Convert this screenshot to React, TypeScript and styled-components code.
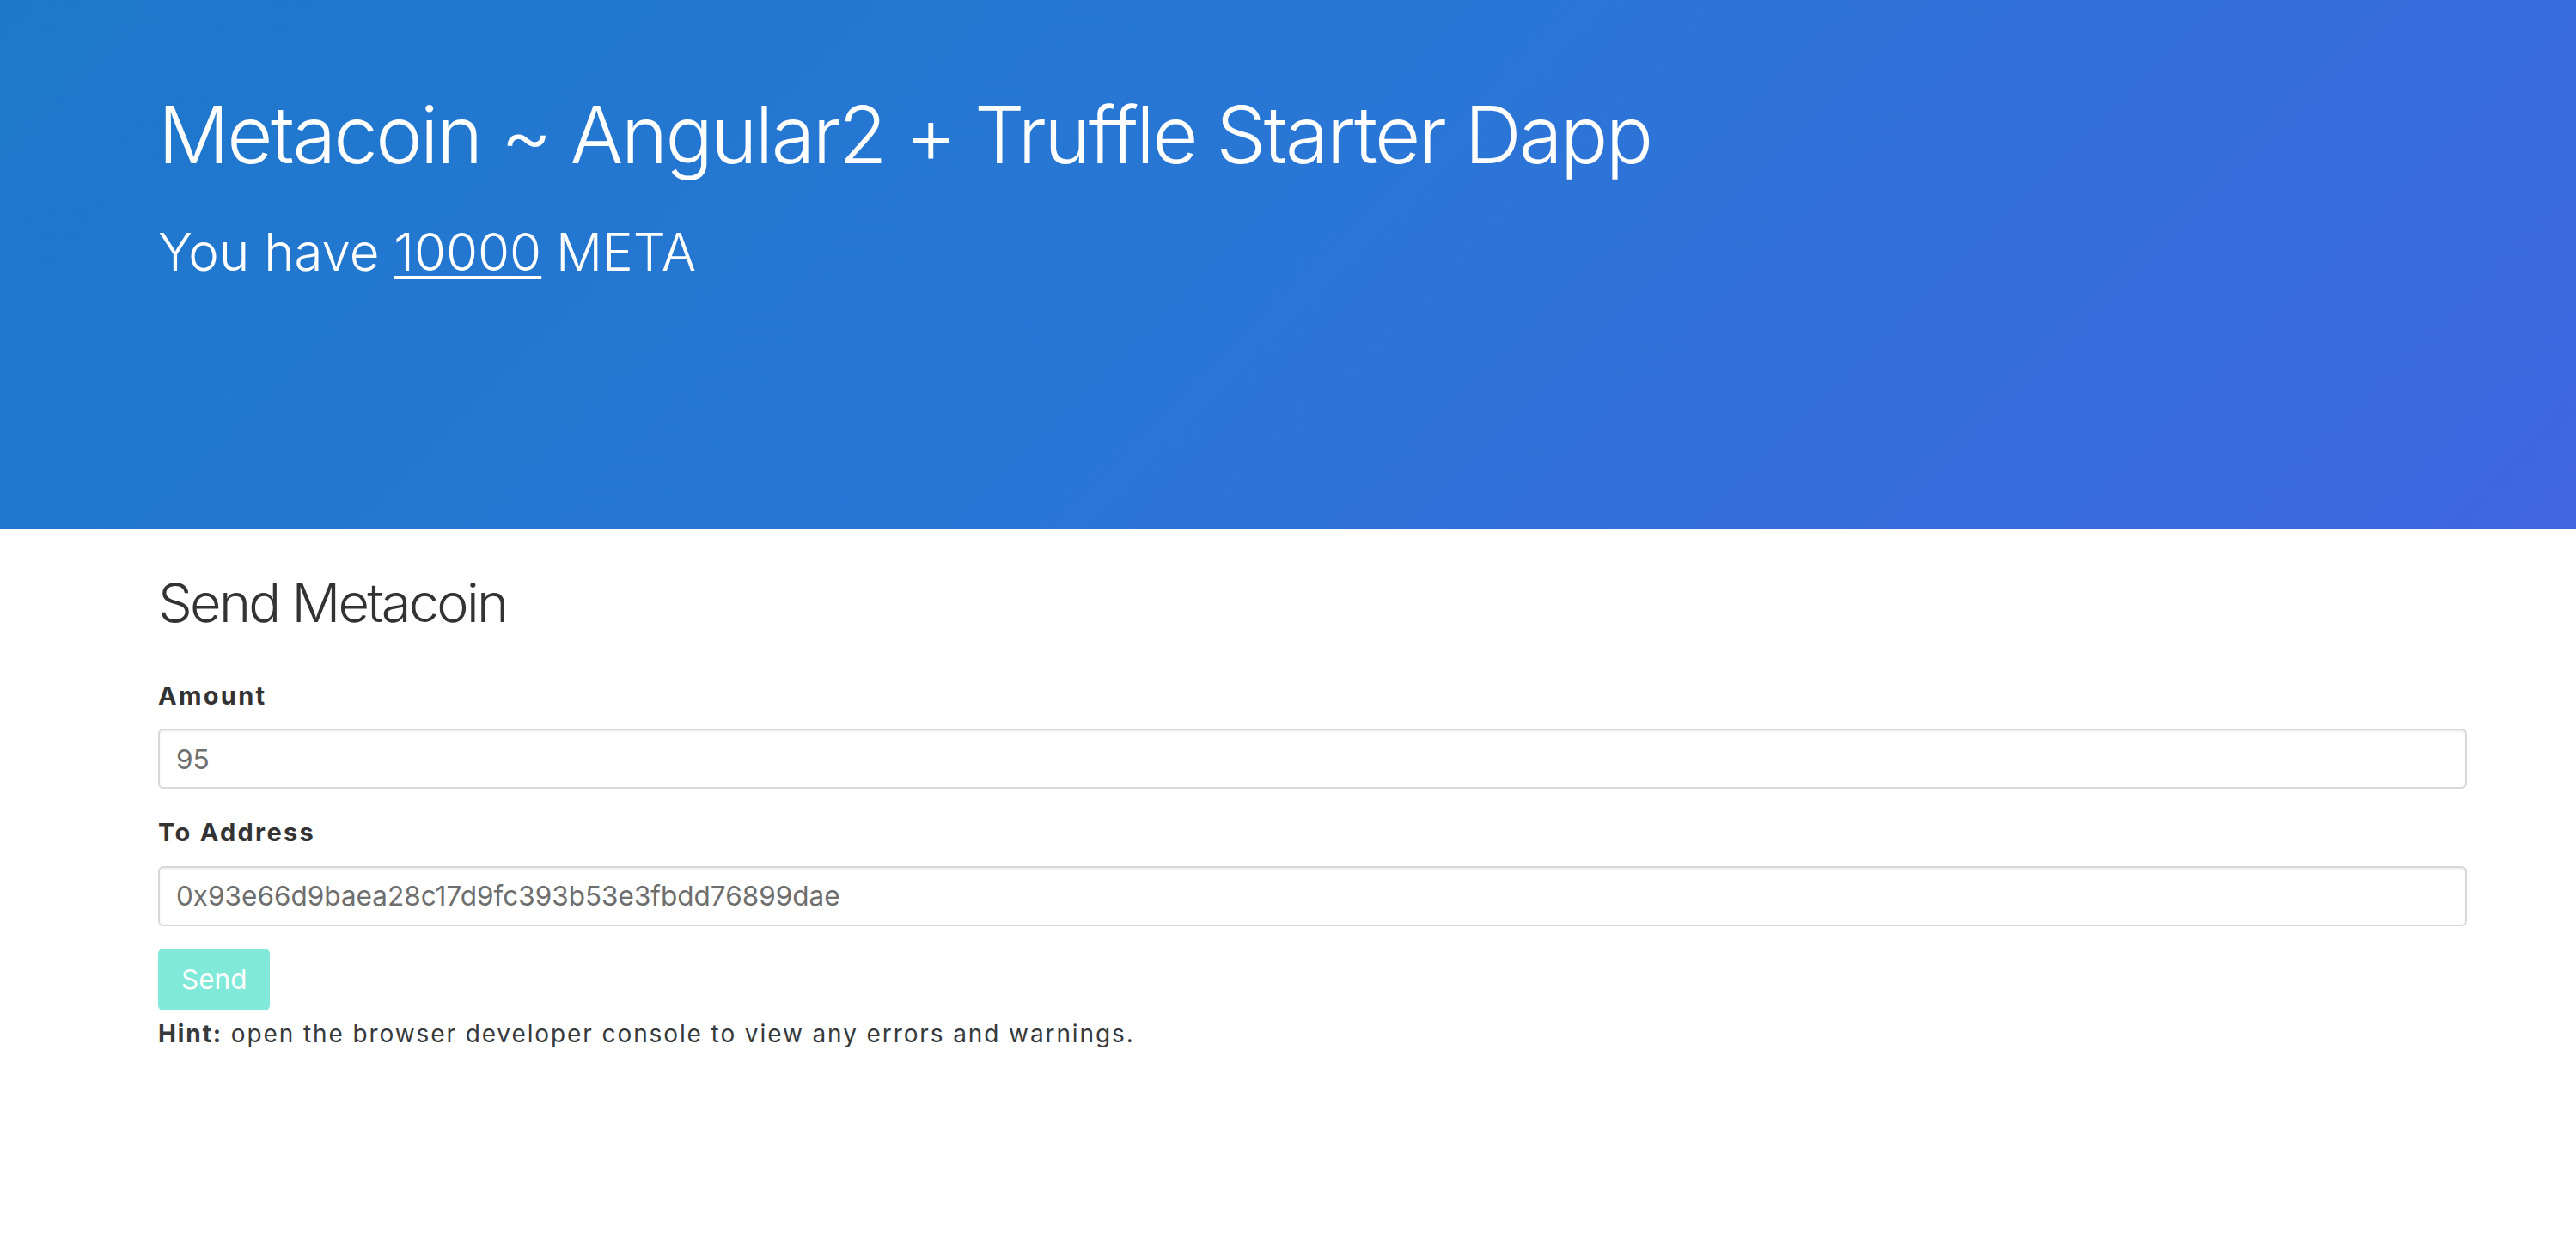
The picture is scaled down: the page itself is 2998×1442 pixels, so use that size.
import React from "react";
import styled, { createGlobalStyle } from "styled-components";

const GlobalStyle = createGlobalStyle`
  html, body {
    margin: 0;
    padding: 0;
    background: #ffffff;
  }
  body {
    font-family: Inter, "Liberation Sans", Arial, sans-serif;
    color: #333333;
  }
  * { box-sizing: border-box; }
`;

const Page = styled.div`
  width: 100%;
  min-height: 1442px;
  background: #ffffff;
`;

const Hero = styled.header`
  height: 616px;
  padding: 106px 184px 0 184px;
  background: linear-gradient(135deg, #1d78cb 0%, #2a76d6 50%, #4066e0 100%);
  color: #ffffff;
`;

const Title = styled.h1`
  margin: 0;
  font-family: Inter, "Liberation Sans", sans-serif;
  font-weight: 300;
  font-size: 92px;
  line-height: 1.1;
  letter-spacing: -2.6px;
`;

const Balance = styled.p`
  margin: 50px 0 0 0;
  font-family: Inter, "Liberation Sans", sans-serif;
  font-weight: 300;
  font-size: 60px;
  line-height: 1.2;
  letter-spacing: 0;
`;

const Amount = styled.span`
  text-decoration: underline;
  text-decoration-thickness: 4px;
  text-underline-offset: 6px;
`;

const Main = styled.main`
  padding: 48px 127px 0 184px;
  display: flex;
  flex-direction: column;
`;

const SectionTitle = styled.h2`
  margin: 0 0 48px 0;
  font-family: Inter, "Liberation Sans", sans-serif;
  font-weight: 300;
  font-size: 63px;
  line-height: 1.2;
  letter-spacing: -2.7px;
  color: #333333;
`;

const Field = styled.div<{ $last?: boolean }>`
  display: flex;
  flex-direction: column;
  gap: 17px;
  margin-bottom: ${(p) => (p.$last ? "26px" : "29px")};
`;

const Label = styled.label`
  font-family: Inter, "Liberation Sans", Arial, sans-serif;
  font-weight: 700;
  font-size: 29px;
  line-height: 1.5;
  letter-spacing: 2.3px;
  color: #333333;
`;

const Input = styled.input`
  width: 100%;
  height: 70px;
  padding: 0 19px;
  border: 2px solid #d8d8d8;
  border-radius: 6px;
  box-shadow: inset 0 2px 2px rgba(0, 0, 0, 0.06);
  font-family: Inter, "Liberation Sans", Arial, sans-serif;
  font-size: 31.5px;
  color: #6e6e6e;
  background: #ffffff;
  outline: none;
`;

const SendButton = styled.button`
  align-self: flex-start;
  height: 72px;
  padding: 0 27px;
  border: none;
  border-radius: 6px;
  background: #80e9d9;
  color: #ffffff;
  font-family: Inter, "Liberation Sans", Arial, sans-serif;
  font-size: 31.5px;
  cursor: pointer;
`;

const Hint = styled.p`
  margin: 6px 0 0 0;
  font-family: Inter, "Liberation Sans", Arial, sans-serif;
  font-size: 28px;
  line-height: 1.5;
  letter-spacing: 1.9px;
  color: #373a3c;
`;

export default function App() {
  return (
    <Page>
      <GlobalStyle />
      <Hero>
        <Title>Metacoin ~ Angular2 + Truffle Starter Dapp</Title>
        <Balance>
          You have <Amount>10000</Amount> META
        </Balance>
      </Hero>
      <Main>
        <SectionTitle>Send Metacoin</SectionTitle>
        <Field>
          <Label htmlFor="amount">Amount</Label>
          <Input id="amount" defaultValue="95" />
        </Field>
        <Field $last>
          <Label htmlFor="to">To Address</Label>
          <Input id="to" defaultValue="0x93e66d9baea28c17d9fc393b53e3fbdd76899dae" />
        </Field>
        <SendButton>Send</SendButton>
        <Hint>
          <b>Hint:</b> open the browser developer console to view any errors and warnings.
        </Hint>
      </Main>
    </Page>
  );
}
